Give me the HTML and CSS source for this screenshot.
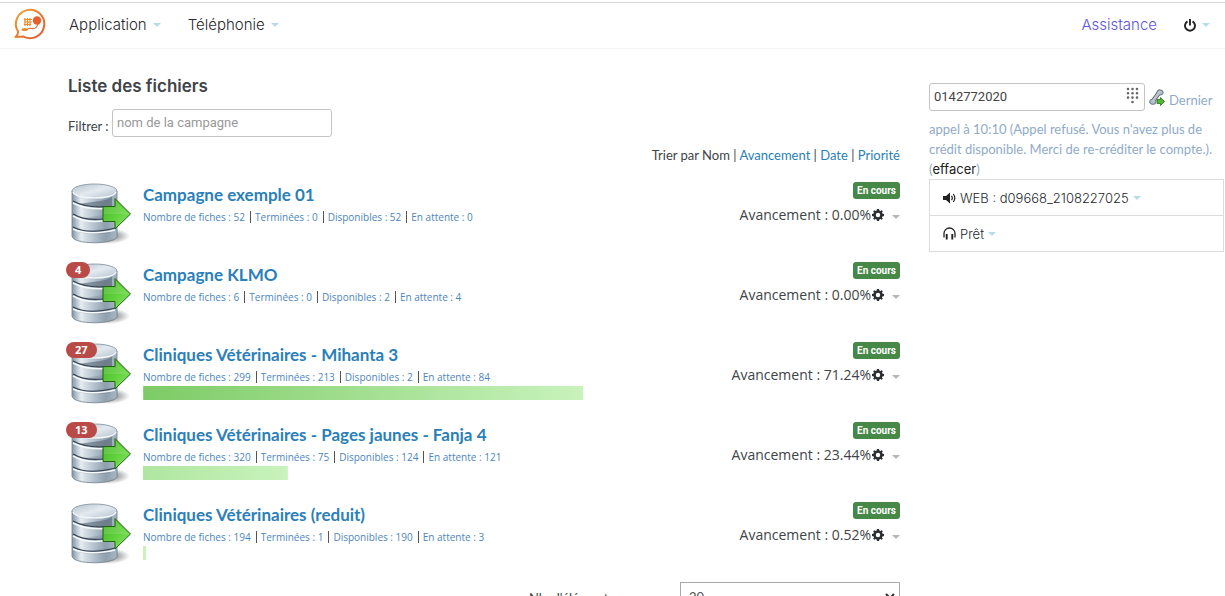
FILE: index.html
```html
<!DOCTYPE html>
<html lang="fr">
<head>
<meta charset="utf-8">
<title>Liste des fichiers</title>
<link rel="stylesheet" href="styles.css">
</head>
<body>
<svg class="defs" width="0" height="0" aria-hidden="true">
  <defs>
    <linearGradient id="metal" x1="0" x2="1" y1="0" y2="0">
      <stop offset="0" stop-color="#8496a6"/><stop offset=".2" stop-color="#e6edf2"/><stop offset=".4" stop-color="#c3ced8"/><stop offset=".75" stop-color="#8e9fae"/><stop offset="1" stop-color="#a9b7c3"/>
    </linearGradient>
    <linearGradient id="lid" x1="0" x2="1" y1="0" y2="1">
      <stop offset="0" stop-color="#b4c1cd"/><stop offset=".5" stop-color="#e3eaf0"/><stop offset="1" stop-color="#b5c2ce"/>
    </linearGradient>
    <linearGradient id="leaf" x1="0" x2="1" y1="0" y2="1">
      <stop offset="0" stop-color="#3fae1c"/><stop offset=".5" stop-color="#5fd03b"/><stop offset="1" stop-color="#8be86c"/>
    </linearGradient>
    <radialGradient id="shade"><stop offset="0" stop-color="#000" stop-opacity=".65"/><stop offset="1" stop-color="#000" stop-opacity="0"/></radialGradient>
    <linearGradient id="orange" x1="0" x2="1" y1="0" y2="1"><stop offset="0" stop-color="#f2a12e"/><stop offset="1" stop-color="#e3552f"/></linearGradient>
  </defs>
  <symbol id="database" viewBox="0 0 62 64">
    <ellipse cx="37" cy="53" rx="23" ry="8" fill="url(#shade)"/>
    <path d="M2 8v45c0 9 45 9 45 0V8z" fill="url(#metal)" stroke="#6c7d8c" stroke-width=".8"/>
    <path d="M8 21q16 4 34 1v-9q-3 4-12 5z" fill="#566575" opacity=".6"/>
    <path d="M8 36q12 4 25 2v-6l-12 2zM8 49q14 4 32 1v-5l-16 2z" fill="#566575" opacity=".22"/>
    <path d="M3 20q16 8 39 5M3 33q12 7 30 5M3 46q16 7 42 1" fill="none" stroke="#f5f9fb" stroke-width="1.500"/>
    <path d="M3 18q14 8 39 5M3 31q12 7 30 5M3 44q16 8 42 1" fill="none" stroke="#344250" stroke-width="1.200"/>
    <ellipse cx="24.500" cy="8" rx="22.500" ry="7" fill="url(#lid)" stroke="#7d8d9b" stroke-width=".8"/>
    <path d="M3 9c2 8 41 8 43 0" fill="none" stroke="#f5f8fa" stroke-width="1.300"/>
    <path d="M33 23.500h12v-8L60.500 31 45 46v-7.500H33z" fill="url(#leaf)" stroke="#246414" stroke-width="1"/>
    <path d="M34 24.500h12v-6L58 31H34z" fill="#fff" opacity=".12"/>
  </symbol>
  <symbol id="gear" viewBox="0 0 12 12">
    <path fill="#2b2f33" fill-rule="evenodd" d="M5 0h2l.4 1.600 1 .4L9.800 1.200l1 1L10 3.600l.4 1L12 5v2l-1.600.4-.4 1 .8 1.400-1 1L8.400 10l-1 .4L7 12H5l-.4-1.600-1-.4-1.400.8-1-1L2 8.400l-.4-1L0 7V5l1.600-.4.4-1L1.200 2.200l1-1L3.600 2l1-.4zM6 3.800a2.200 2.200 0 100 4.400 2.200 2.200 0 000-4.400z"/>
  </symbol>
</svg>

<header class="topbar">
  <a class="logo" href="#" aria-label="Accueil">
    <svg width="32" height="32" viewBox="0 0 32 32" fill="none">
      <path d="M4 23.500A14.200 14.200 0 1 1 9.500 28.600L1.500 29C3.500 27.500 4.200 25.500 4 23.500z" stroke="url(#orange)" stroke-width="2" stroke-linejoin="round"/>
      <path d="M10 11.500h8M10 14h8M10 16.500h7M11 10v8M13.500 10v8M16 10v8" stroke="#ef8c2e" stroke-width="1.200"/>
      <circle cx="23" cy="12.500" r="4.200" fill="#e6602f"/>
      <path d="M24 15q-1 6.500-6.500 5.500-3-.5-5 1.500" stroke="#e6702f" stroke-width="1.200"/>
      <ellipse cx="10.500" cy="21.500" rx="3" ry="1.600" fill="#ee8a2e"/>
    </svg>
  </a>
  <nav class="menu">
    <button class="menu-item" type="button">Application<span class="caret"></span></button>
    <button class="menu-item" type="button">Téléphonie<span class="caret"></span></button>
  </nav>
  <a class="help" href="#">Assistance</a>
  <button class="power" type="button" aria-label="Session">
    <svg width="12" height="13" viewBox="0 0 12 13" fill="none" stroke="#222" stroke-width="1.900"><path d="M3.500 2.400a5 5 0 1 0 5 0M6 0v6.500"/></svg>
    <span class="caret"></span>
  </button>
</header>

<div class="page">
  <main>
    <h1>Liste des fichiers</h1>
    <div class="filter">
      <label for="filter">Filtrer :</label>
      <input class="field" id="filter" type="text" placeholder="nom de la campagne">
    </div>
    <p class="sort">Trier par Nom | <a href="#">Avancement</a> | <a href="#">Date</a> | <a href="#">Priorité</a></p>

    <section class="campaign">
      <div class="icon"><svg width="62" height="64"><use href="#database"/></svg></div>
      <div class="info">
        <h2><a href="#">Campagne exemple 01</a></h2>
        <p class="stats"><span>Nombre de fiches : 52</span><span>Terminées : 0</span><span>Disponibles : 52</span><span>En attente : 0</span></p>
      </div>
      <div class="state"><span class="tag">En cours</span><div class="progress">Avancement : 0.00%<button type="button" aria-label="Options"><svg width="12" height="12"><use href="#gear"/></svg><span class="caret muted"></span></button></div></div>
    </section>

    <section class="campaign">
      <div class="icon"><svg width="62" height="64"><use href="#database"/></svg><span class="count">4</span></div>
      <div class="info">
        <h2><a href="#">Campagne KLMO</a></h2>
        <p class="stats"><span>Nombre de fiches : 6</span><span>Terminées : 0</span><span>Disponibles : 2</span><span>En attente : 4</span></p>
      </div>
      <div class="state"><span class="tag">En cours</span><div class="progress">Avancement : 0.00%<button type="button" aria-label="Options"><svg width="12" height="12"><use href="#gear"/></svg><span class="caret muted"></span></button></div></div>
    </section>

    <section class="campaign">
      <div class="icon"><svg width="62" height="64"><use href="#database"/></svg><span class="count">27</span></div>
      <div class="info">
        <h2><a href="#">Cliniques Vétérinaires - Mihanta 3</a></h2>
        <p class="stats"><span>Nombre de fiches : 299</span><span>Terminées : 213</span><span>Disponibles : 2</span><span>En attente : 84</span></p>
        <div class="bar" style="width:71.24%"></div>
      </div>
      <div class="state"><span class="tag">En cours</span><div class="progress">Avancement : 71.24%<button type="button" aria-label="Options"><svg width="12" height="12"><use href="#gear"/></svg><span class="caret muted"></span></button></div></div>
    </section>

    <section class="campaign">
      <div class="icon"><svg width="62" height="64"><use href="#database"/></svg><span class="count">13</span></div>
      <div class="info">
        <h2><a href="#">Cliniques Vétérinaires - Pages jaunes - Fanja 4</a></h2>
        <p class="stats"><span>Nombre de fiches : 320</span><span>Terminées : 75</span><span>Disponibles : 124</span><span>En attente : 121</span></p>
        <div class="bar" style="width:23.44%"></div>
      </div>
      <div class="state"><span class="tag">En cours</span><div class="progress">Avancement : 23.44%<button type="button" aria-label="Options"><svg width="12" height="12"><use href="#gear"/></svg><span class="caret muted"></span></button></div></div>
    </section>

    <section class="campaign">
      <div class="icon"><svg width="62" height="64"><use href="#database"/></svg></div>
      <div class="info">
        <h2><a href="#">Cliniques Vétérinaires (reduit)</a></h2>
        <p class="stats"><span>Nombre de fiches : 194</span><span>Terminées : 1</span><span>Disponibles : 190</span><span>En attente : 3</span></p>
        <div class="bar" style="width:0.52%"></div>
      </div>
      <div class="state"><span class="tag">En cours</span><div class="progress">Avancement : 0.52%<button type="button" aria-label="Options"><svg width="12" height="12"><use href="#gear"/></svg><span class="caret muted"></span></button></div></div>
    </section>

    <div class="paging">
      <label for="size">Nb. d'éléments par page</label>
      <div class="select"><select id="size"><option>20</option></select>
        <svg width="10" height="7" viewBox="0 0 10 7" fill="none" stroke="#333" stroke-width="2"><path d="M1 1l4 4 4-4"/></svg></div>
    </div>
  </main>

  <aside>
    <div class="call">
      <div class="dial">
        <input class="field" type="tel" aria-label="Numéro" value="0142772020">
        <svg width="13" height="17" viewBox="0 0 13 17" fill="none" stroke="#666" stroke-width="2.600" stroke-linecap="round"><path d="M2 2h0M6.500 2h0M11 2h0M2 6.300h0M6.500 6.300h0M11 6.300h0M2 10.600h0M6.500 10.600h0M11 10.600h0M6.500 15h0"/></svg>
      </div>
      <svg class="handset" width="16" height="17" viewBox="0 0 16 17">
        <path d="M10.500 3L4 12" stroke="#56616b" stroke-width="4.500" stroke-linecap="round"/>
        <ellipse cx="11" cy="3.500" rx="3.200" ry="2.600" fill="#aebcc7" stroke="#56616b" stroke-width=".8"/>
        <ellipse cx="3.800" cy="12.800" rx="3.200" ry="2.600" fill="#aebcc7" stroke="#56616b" stroke-width=".8"/>
        <path d="M10.500 3L4 12" stroke="#b9c6d0" stroke-width="2.800" stroke-linecap="round"/>
        <path d="M15.500 12.500L11.500 8.500v2H8v4h3.500v2z" fill="#4cba2c" stroke="#25701a" stroke-width=".8"/>
      </svg>
      <span>Dernier</span>
    </div>
    <p class="notice">appel à 10:10 (Appel refusé. Vous n'avez plus de crédit disponible. Merci de re-créditer le compte.). (<a href="#">effacer</a>)</p>
    <div class="devices">
      <button type="button"><svg width="13" height="12" viewBox="0 0 13 12" fill="none" stroke="#222" stroke-width="1.200"><path d="M0 4h3l4-3.500v11L3 8H0z" fill="#222" stroke="none"/><path d="M8.500 3.800q1.600 2.200 0 4.400M10.300 2q3 4 0 8"/></svg>WEB : d09668_2108227025<span class="caret"></span></button>
      <button type="button"><svg width="13" height="13" viewBox="0 0 13 13" fill="none" stroke="#222"><path d="M1 10.500V6.500a5.500 5.500 0 0 1 11 0v4" stroke-width="1.300"/><path d="M3.700 7v5.500M9.300 7v5.500" stroke-width="1.900"/></svg>Prêt<span class="caret"></span></button>
    </div>
  </aside>
</div>
</body>
</html>
```
FILE: styles.css
```css
* { box-sizing: border-box; }
html { scrollbar-width: none; }
body {
  margin: 0;
  background: #fff;
  color: #404448;
  font: 13px/20px Lato, "Noto Sans", sans-serif;
}
h1, h2, p { margin: 0; }
a { color: #2a7fb8; text-decoration: none; }
button { border: 0; padding: 0; background: none; font: inherit; color: inherit; }
svg { display: block; flex: none; }
.defs { position: absolute; }

.caret {
  flex: none;
  border: 4px solid transparent;
  border-top-color: #b5dde8;
  border-bottom: 0;
}
.caret.muted { border-top-color: #b8b8b8; margin-top: 4px; }

.topbar {
  display: flex;
  align-items: center;
  margin-top: 2px;
  padding: 0 15px 1px 14px;
  height: 47px;
  border-top: 1px solid #d4d4d6;
  border-bottom: 1px solid #f3f3f3;
  color: #26282c;
  font: 300 15px/24px Inter, sans-serif;
}
.logo { padding-bottom: 2px; }
.menu { display: flex; gap: 27px; margin-left: 23px; }
.menu-item { display: flex; align-items: center; gap: 6px; }
.help { margin-left: auto; color: #5a55d6; }
.power { display: flex; align-items: center; gap: 6px; margin-left: 27px; }

.page {
  display: grid;
  grid-template-columns: minmax(0, 1fr) 295px;
  gap: 29px;
  padding: 25px 1px 0 68px;
}
h1 { font: 600 17px/24px Inter, sans-serif; }
.filter { display: flex; align-items: center; gap: 4px; margin-top: 11px; }
.filter label { width: 40px; padding-top: 6px; white-space: nowrap; }
.filter .field { width: 220px; }
.field {
  height: 28px;
  padding: 0 4px 2px;
  border: 1px solid #c4c4c4;
  border-radius: 3px;
  background: #fff;
  color: #444;
  font: 13px/20px Roboto, sans-serif;
}
.field::placeholder { color: #999; opacity: 1; }
.sort { margin-top: 8px; text-align: right; }

.campaign {
  display: grid;
  grid-template-columns: 75px minmax(0, 1fr) 139px;
  height: 80px;
  padding-top: 8px;
}
.sort + .campaign { margin-top: 10px; }
.icon { position: relative; padding-left: 2px; }
.count {
  position: absolute;
  top: -1px;
  left: -2px;
  padding: 0 9px;
  border-radius: 9px;
  background: #b94a48;
  color: #fff;
  font: 700 11px/16px "Open Sans", sans-serif;
}
h2 { font: 700 17px/24px Lato, sans-serif; }
.stats { display: flex; padding-top: 1px; color: #4c86bd; font: 10px/18px "Open Sans", sans-serif; }
.stats span { display: flex; align-items: center; }
.stats span + span::before {
  content: "";
  width: 1px;
  height: 12px;
  margin: 0 4px 0 5px;
  background: #555;
}
.bar {
  height: 14px;
  background: linear-gradient(to right, #7dcb66, #c8f3bc) right / 440px 100%;
}
.state { display: flex; flex-direction: column; align-items: flex-end; }
.tag {
  margin-top: -1px;
  padding: 0 4px;
  border-radius: 3px;
  background: #468847;
  color: #fff;
  font: 700 10px/17px Roboto, sans-serif;
}
.progress { display: flex; align-items: center; margin-top: 6px; font: 14px/20px "Open Sans", sans-serif; white-space: nowrap; }
.progress button { display: flex; align-items: center; gap: 8px; margin-left: 1px; }

.paging { display: flex; align-items: flex-start; justify-content: flex-end; margin-top: 7px; }
.paging label { width: 151px; padding-top: 6px; white-space: nowrap; }
.select { position: relative; }
.select select {
  appearance: none;
  width: 220px;
  height: 30px;
  padding: 0 8px;
  border: 1px solid #aaa;
  border-radius: 0;
  background: #fff;
  color: #555;
  font: 13px/20px Lato, sans-serif;
}
.select svg { position: absolute; right: 5px; top: 11px; }

aside { padding-top: 9px; color: #8fabca; }
.call { display: flex; align-items: center; gap: 4px; }
.call > span { padding-top: 6px; }
.dial { position: relative; width: 216px; }
.dial .field { display: block; width: 100%; }
.dial svg { position: absolute; top: 4px; right: 6px; }
.notice { margin-top: 8px; }
.notice a { color: #222; font-family: Inter, sans-serif; }
.devices { border: 1px solid #dcdcdc; }
.devices button {
  display: flex;
  align-items: center;
  gap: 4px;
  width: 100%;
  height: 35px;
  padding-left: 13px;
  color: #26282c;
  font: 300 13px/20px Inter, sans-serif;
}
.devices button + button { height: 36px; border-top: 1px solid #dcdcdc; }
```
